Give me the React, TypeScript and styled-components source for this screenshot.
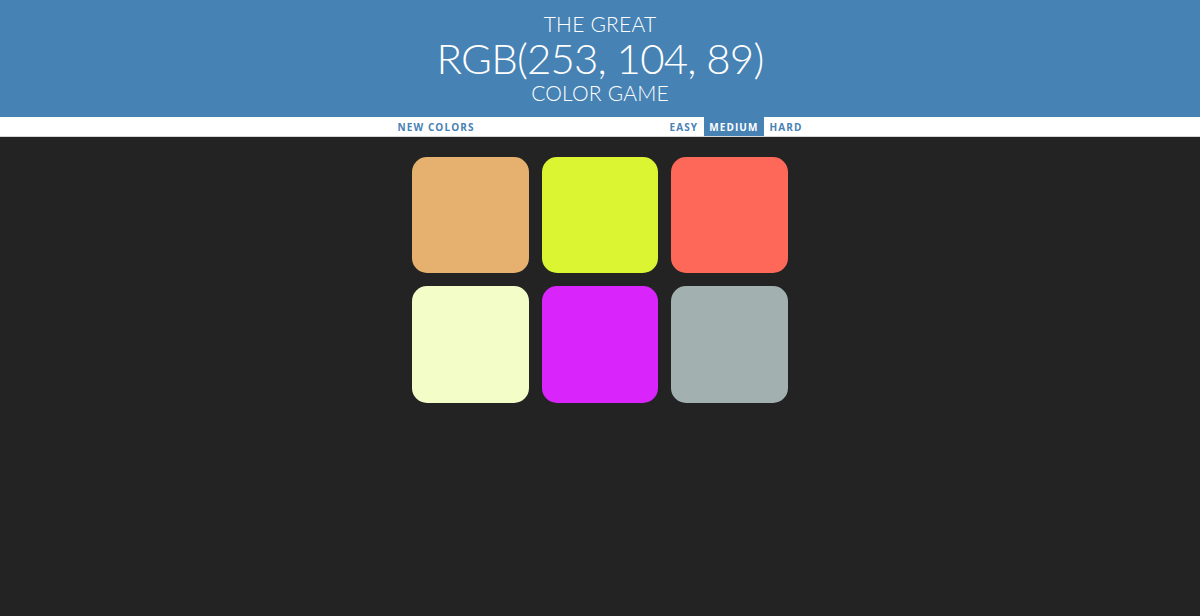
import React, { useState } from 'react'
import styled, { createGlobalStyle } from 'styled-components'

const GlobalStyle = createGlobalStyle`
  html, body {
    margin: 0;
    padding: 0;
    background-color: #232323;
  }
`

const colors = [
  'rgb(230, 177, 110)',
  'rgb(219, 245, 50)',
  'rgb(253, 104, 89)',
  'rgb(242, 253, 200)',
  'rgb(217, 36, 252)',
  'rgb(162, 176, 176)',
]

const modes = ['Easy', 'Medium', 'Hard']

function App() {
  const [mode, setMode] = useState('Medium')

  return (
    <Page>
      <GlobalStyle />
      <Header>
        <Line>The Great</Line>
        <ColorDisplay>RGB(253, 104, 89)</ColorDisplay>
        <Line>Color Game</Line>
      </Header>
      <Stripe>
        <StripeInner>
          <NavButton>New Colors</NavButton>
          <Message />
          {modes.map(m => (
            <NavButton key={m} selected={m === mode} onClick={() => setMode(m)}>
              {m}
            </NavButton>
          ))}
        </StripeInner>
      </Stripe>
      <Board>
        {colors.map(c => (
          <Square key={c} style={{ backgroundColor: c }} />
        ))}
      </Board>
    </Page>
  )
}

export default App

const Page = styled.div`
  background-color: #232323;
  min-height: 100vh;
`

const Header = styled.h1`
  background-color: #4682b4;
  color: #ffffff;
  font-family: Lato, 'Open Sans', sans-serif;
  font-weight: 300;
  line-height: 1.1;
  margin: 0;
  padding: 12px 0 13px;
  text-align: center;
  text-transform: uppercase;
`

const Line = styled.div`
  font-size: 21px;
  letter-spacing: 0.2px;
`

const ColorDisplay = styled.div`
  font-size: 42px;
  letter-spacing: -0.8px;
  text-transform: none;
`

const Stripe = styled.div`
  background-color: #ffffff;
  border-bottom: 1px solid #d6d6d6;
  display: flex;
  height: 19px;
  justify-content: center;
`

const StripeInner = styled.div`
  display: flex;
  height: 100%;
  width: 416px;
`

const Message = styled.span`
  flex: 1;
`

const NavButton = styled.button<{ selected?: boolean }>`
  background-color: ${p => (p.selected ? '#4682b4' : 'transparent')};
  border: none;
  color: ${p => (p.selected ? '#ffffff' : '#4682b4')};
  cursor: pointer;
  font-family: 'Open Sans', 'Noto Sans', sans-serif;
  font-size: 10px;
  font-weight: 700;
  height: 100%;
  letter-spacing: 1.1px;
  outline: none;
  padding: 0 5.5px;
  text-transform: uppercase;
`

const Board = styled.div`
  display: flex;
  flex-wrap: wrap;
  margin: 13px auto 0;
  width: 388.5px;
`

const Square = styled.div`
  border-radius: 15px;
  height: 116.5px;
  margin: 6.5px;
  width: 116.5px;
`
